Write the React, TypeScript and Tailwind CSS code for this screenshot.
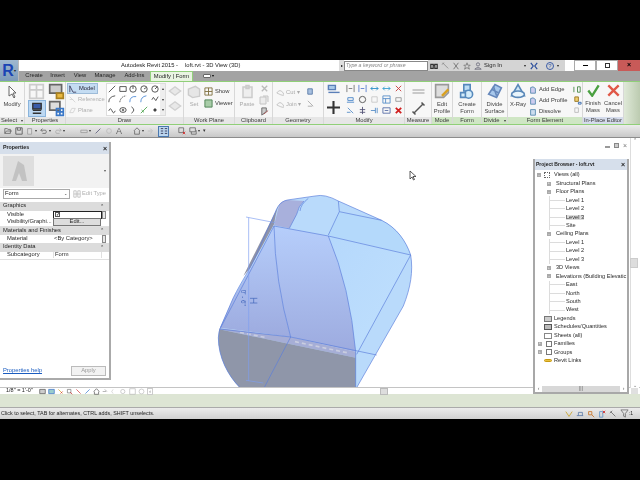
import React from "react";

type IP = { s?: number; c?: string; children?: React.ReactNode };
const I = ({ s = 9, c = "#555", children }: IP) => (
  <svg width={s} height={s} viewBox="0 0 10 10" fill="none" stroke={c} strokeWidth="1" className="shrink-0">
    {children}
  </svg>
);

const Panel = ({ w, label, green, blue, children, arrow }: { w: string; label: string; green?: boolean; blue?: boolean; arrow?: boolean; children?: React.ReactNode }) => (
  <div className={`${w} flex h-full shrink-0 flex-col border-r border-[#d8d8d8]`}>
    <div className="flex min-h-0 flex-1 items-stretch overflow-hidden">{children}</div>
    <div className={`flex h-[7px] items-center justify-center whitespace-nowrap text-[5.8px] leading-none text-[#3a3a3a] ${green ? "bg-[#cfe6c4]" : blue ? "bg-[#d5dcec]" : "bg-[#e6e6e6]"}`}>
      {label}
      {arrow && <span className="ml-1 text-[4px]">▾</span>}
    </div>
  </div>
);

const Big = ({ label, children, w = "w-[22px]" }: { label: React.ReactNode; children: React.ReactNode; w?: string }) => (
  <div className={`${w} flex shrink-0 flex-col items-center pt-[1px] text-center text-[5.8px] leading-[7px] text-[#444]`}>
    {children}
    <div className="mt-[2px] whitespace-nowrap">{label}</div>
  </div>
);

const Row = ({ icon, t, c = "#3a3a3a" }: { icon: React.ReactNode; t: string; c?: string }) => (
  <div className="flex h-[11px] items-center gap-[2px] whitespace-nowrap text-[5.8px] leading-none" style={{ color: c }}>
    {icon}
    <span>{t}</span>
  </div>
);

const GrayDoc = () => (
  <I s={10} c="#c4c4c4">
    <path d="M1 2h6v7H1zM4 1h5v6" fill="#ececec" />
  </I>
);

const drawIcons: React.ReactNode[] = [
  <path d="M1 9L9 1" />,
  <path d="M1 2h8v6H1z" />,
  <><circle cx="5" cy="5" r="4" /><path d="M5 5V1" /></>,
  <><circle cx="5" cy="5" r="4" /><path d="M5 5l3-2" /></>,
  <><circle cx="5" cy="5" r="4" /><path d="M5 5l3-3" /></>,
  <path d="M1 9Q1 2 9 1" />,
  <path d="M1 9Q2 2 9 1" strokeDasharray="2 1" />,
  <path d="M1 9Q1 1 9 2" stroke="#3b7dd0" />,
  <path d="M1 9Q1 2 8 1" stroke="#3b7dd0" />,
  <path d="M1 6l2-3 3 4 3-5" />,
  <path d="M1 6q2-5 4 0t4 0" />,
  <><ellipse cx="5" cy="5" rx="4" ry="3" /><circle cx="5" cy="5" r="1" /></>,
  <path d="M3 1q6 4 0 8" />,
  <path d="M1 9l8-8M2 5l3 3" stroke="#3a9a3a" />,
  <circle cx="5" cy="5" r="1.5" fill="#555" />,
];

const modIcons: React.ReactNode[] = [
  <path d="M1 1v8M9 1v8M3 5h4" stroke="#777" />,
  <path d="M1 1v8M9 1v8M3 5h4" stroke="#5a7fd0" />,
  <path d="M1 5h8M3 3l-2 2 2 2M7 3l2 2-2 2" stroke="#2c8ec8" />,
  <path d="M1 5h8M3 3l-2 2 2 2M7 3l2 2-2 2" stroke="#3aa0d0" />,
  <path d="M2 2l6 6M8 2L2 8" stroke="#c83a3a" />,
  <path d="M1 8h8M2 6h6V3H2z" stroke="#4a86c8" />,
  <circle cx="5" cy="5" r="3.5" stroke="#555" />,
  <path d="M2 2h6v6H2z" stroke="#c8c8c8" />,
  <path d="M1 1h8v8H1zM1 4h8M4 4v5" stroke="#5a90c8" />,
  <path d="M2 3h6v4H2z" stroke="#999" />,
  <path d="M2 2l3 3 3 3M1 7h4" stroke="#5a90c8" />,
  <path d="M5 1v8M2 4h6M2 7h6" stroke="#557" />,
  <path d="M1 5h5M6 2v6M8 2v6" stroke="#5a90c8" />,
  <path d="M1 2h8v6H1zM3 5h4" stroke="#5a70a8" />,
  <path d="M2 2l6 6M8 2L2 8" stroke="#d02020" strokeWidth="2" />,
];

const Tab = ({ t, active, w }: { t: string; active?: boolean; w: string }) => (
  <div className={`${w} flex h-full shrink-0 items-center justify-center whitespace-nowrap text-[5.8px] leading-none ${active ? "border-x border-t border-[#93d07c] bg-[#e9f4e2] text-[#222]" : "text-[#1f1f1f]"}`}>
    {t}
  </div>
);

const Qat = ({ children, caret }: { children: React.ReactNode; caret?: boolean }) => (
  <div className="flex items-center gap-[1px]">
    <I s={8} c="#666">{children}</I>
    {caret && <span className="text-[4px] text-[#333]">▾</span>}
  </div>
);

const PropHead = ({ t }: { t: string }) => (
  <div className="flex h-[8.5px] items-center justify-between bg-[#dcdcdc] pl-[3px] pr-[5px] text-[5.8px] leading-none text-[#1f1f1f]">
    <span>{t}</span>
    <span className="text-[5px]">⌃</span>
  </div>
);

const TreeRow = ({ pad, t, mark, sel, icon, markGap = "mr-[3px]" }: { pad: string; t: string; mark?: string; sel?: boolean; icon?: React.ReactNode; markGap?: string }) => (
  <div className={`flex h-[8.45px] items-center ${pad} text-[5.6px] leading-none text-[#2a2a2a]`}>
    {mark && <span className={`${markGap} flex h-[4px] w-[4px] shrink-0 items-center justify-center bg-[#aaa] text-[3px] leading-none text-white`}>{mark}</span>}
    {icon}
    <span className={`whitespace-nowrap ${sel ? "bg-[#dcdcdc]" : ""}`}>{t}</span>
  </div>
);

const Leaf = ({ t, sel }: { t: string; sel?: boolean }) => (
  <div className="flex h-[8.45px] items-center pl-[14px] text-[5.6px] leading-none text-[#2a2a2a]">
    <span className="flex h-full w-[17px] shrink-0 items-center border-l border-[#dcdcdc]">
      <span className="h-px w-[15px] bg-[#dcdcdc]" />
    </span>
    <span className={`whitespace-nowrap ${sel ? "bg-[#dcdcdc]" : ""}`}>{t}</span>
  </div>
);

const Shape = () => {
  const outline = "M225 95C232 78 240 62 262 57L345 45Q375 38 415 60L545 118C590 140 618 180 632 222C640 270 632 320 610 375L470 620H120C85 585 55 530 55 470Q56 450 62 438L100 350C125 300 150 265 165 230Z";
  return (
    <svg className="absolute left-[200px] top-[43px]" width="230" height="207" viewBox="0 0 690 621" fill="none">
      <defs>
        <linearGradient id="mid" x1="0" y1="0" x2="0" y2="1">
          <stop offset="0" stopColor="#b6cefb" />
          <stop offset="1" stopColor="#9dabdf" />
        </linearGradient>
        <linearGradient id="rt" x1="0" y1="0" x2="1" y2="1">
          <stop offset="0" stopColor="#b5d8fc" />
          <stop offset="1" stopColor="#c0e0fd" />
        </linearGradient>
      </defs>
      <path d={outline} fill="#b9dafb" />
      <path d="M222 135L385 165Q450 320 467 512L272 468Q225 300 222 135Z" fill="url(#mid)" />
      <path d="M222 135Q225 300 272 468L60 440L100 350L165 240Z" fill="url(#mid)" />
      <path d="M385 162L418 92L545 118C590 140 618 180 632 222Z" fill="#b4d9fb" />
      <path d="M385 162L632 222L470 520Q450 320 385 162Z" fill="url(#rt)" />
      <path d="M238 70Q248 58 262 57L312 60Q295 75 290 100L268 142L222 133Z" fill="#a8b0dc" />
      <path d="M238 70C228 90 226 110 222 130L150 262L130 285L225 95Z" fill="#8f93a8" />
      <path d="M60 442L272 468L467 512V530L265 488L58 445Z" fill="#a6aed6" />
      <path d="M58 445L265 488L467 530V621H120C85 585 55 530 55 470Z" fill="#8f96a9" />
      <path d="M120 454L200 470M285 482L445 516" stroke="#c9cde0" strokeWidth="5" strokeDasharray="12 9" />
      <g stroke="#5a7ddb" strokeWidth="2">
        <path d={outline} />
        <path d="M312 60Q295 75 290 100L268 142M325 52Q302 70 300 90" />
        <path d="M222 135L385 165L632 222M385 162L418 92L415 60M418 92L545 118" />
        <path d="M222 135Q225 300 272 468L192 621M385 165Q450 320 467 512V621M632 222L470 520" />
        <path d="M58 444L272 468L530 522M62 440L222 135" />
      </g>
      <g stroke="#7f9ff0" strokeWidth="2">
        <path d="M146 110V600M138 108L225 125M138 598L190 606" />
      </g>
      <path d="M150 352h22M150 366h22M161 352v14" stroke="#3d62b8" strokeWidth="2" />
      <text x="0" y="0" transform="translate(122 326) rotate(90)" fontSize="19" fill="#3d62b8" fontFamily="Liberation Sans, sans-serif">0' - 6"</text>
    </svg>
  );
};

export default function App() {
  return (
    <div className="relative flex h-[480px] w-[640px] flex-col overflow-hidden bg-black font-['Liberation_Sans',sans-serif]">
      <div className="h-[60px] shrink-0" />
      <div className="flex h-[359px] flex-col bg-white blur-[0.25px]">
        {/* title + tabs */}
        <div className="relative flex h-[11px] shrink-0 items-center bg-white">
          <div className="w-[121px]" />
          <div className="text-[5.8px] leading-none text-[#222]">Autodesk Revit 2015 -</div>
          <div className="ml-[7px] text-[5.8px] leading-none text-[#222]">loft.rvt - 3D View (3D)</div>
          <div className="absolute left-[339px] top-0 flex h-[11px] w-[301px] items-center">
            <div className="flex h-[11px] w-[5px] items-center justify-center bg-[#ddd] text-[4px]">▸</div>
            <div className="flex h-[10px] w-[84px] items-center border border-[#888] bg-white pl-[1px] text-[5.2px] italic leading-none text-[#888]">Type a keyword or phrase</div>
            <div className="flex h-[11px] w-[137px] items-center gap-[3px] bg-[#d4d4d4] pl-[2px] text-[5.8px] leading-none text-[#222]">
              <I s={8} c="#333"><path d="M1 3h3v5H1zM6 3h3v5H6zM4 4h2" strokeWidth="1.5" /></I>
              <I s={8} c="#888"><path d="M2 1l7 7M1 3l3-2" /></I>
              <I s={8} c="#666"><path d="M2 1l6 8M8 1L2 9" /></I>
              <I s={8} c="#777"><path d="M5 1l1 3h3L7 6l1 3-3-2-3 2 1-3-2-2h3z" /></I>
              <I s={8} c="#667"><circle cx="5" cy="3" r="2" /><path d="M1 9q4-4 8 0z" /></I>
              <span className="ml-[-1px] w-[30px]">Sign In</span>
              <span className="ml-[7px] text-[4px]">▾</span>
              <span className="ml-[1px]"><I s={8} c="#2b4e9c"><path d="M1 1l3 4-3 4M9 1L6 5l3 4" strokeWidth="1.5" /></I></span>
              <div className="ml-[5px] flex h-[8px] w-[8px] items-center justify-center rounded-full border border-[#3a5ca8] text-[6px] text-[#3a5ca8]">?</div>
              <span className="text-[4px]">▾</span>
            </div>
            <div className="ml-[9px] flex h-[11px] w-[22px] items-center justify-center border border-[#aaa] bg-white"><div className="h-[1px] w-[5px] bg-black" /></div>
            <div className="flex h-[11px] w-[22px] items-center justify-center border border-[#aaa] bg-white"><div className="h-[5px] w-[5px] border border-[#333]" /></div>
            <div className="flex h-[11px] w-[22px] items-center justify-center bg-[#c85a58] text-[7px] font-bold text-black">×</div>
          </div>
        </div>
        <div className="flex h-[10px] shrink-0 items-center bg-[#a3a3a3]">
          <div className="w-[22px]" />
          <Tab w="w-[24px]" t="Create" />
          <Tab w="w-[23px]" t="Insert" />
          <Tab w="w-[22px]" t="View" />
          <Tab w="w-[28px]" t="Manage" />
          <Tab w="w-[31px]" t="Add-Ins" />
          <Tab w="w-[43px]" t="Modify | Form" active />
          <div className="ml-[10px] flex items-center gap-[1px]">
            <div className="h-[4px] w-[8px] rounded-[1px] border border-[#666] bg-white" />
            <span className="text-[4px]">▾</span>
          </div>
        </div>

        {/* ribbon */}
        <div className="flex h-[44px] shrink-0 border-y border-[#90cf78] bg-[#f7f7f7]">
          <Panel w="w-[25px]" label="Select" arrow>
            <Big w="w-full" label="Modify">
              <svg width="10" height="14" viewBox="0 0 10 14" className="mt-[2px]"><path d="M2 1v10l3-2 2 4 1-1-2-4h3z" fill="#fff" stroke="#666" /></svg>
            </Big>
          </Panel>
          <Panel w="w-[41px]" label="Properties">
            <div className="grid grid-cols-2 gap-x-[2px] pl-[3px] pt-[1px]">
              <I s={17} c="#ccc"><path d="M1 1h4v8H1zM5 1h4v8H5zM1 4h8" /></I>
              <I s={17} c="#666"><path d="M1 1h7v5H1z" fill="#ccc" /><path d="M5 6h4v3H5z" fill="#e8b840" stroke="#a88020" /></I>
              <div className="flex h-[17px] w-[18px] items-center justify-center border border-[#8ab4dc] bg-[#bcd8f2]"><I s={14} c="#333"><path d="M2 1h6v4H2z" fill="#3a5ca8" /><path d="M2 6h6M2 8h6" /></I></div>
              <I s={17} c="#666"><path d="M1 1h6v5H1z" fill="#ddd" /><path d="M5 5h4v4H5zM7 5v4M5 7h4" stroke="#3a78c8" /></I>
            </div>
          </Panel>
          <Panel w="w-[118px]" label="Draw">
            <div className="flex w-[38px] flex-col pl-[1px] pt-[1px]">
              <div className="flex h-[11px] w-[31px] items-center gap-[2px] border border-[#9dbbd8] bg-[#c4dcf2] pl-[1px] text-[5.8px] leading-none text-[#223]">
                <I s={8} c="#335"><path d="M1 9V1l4 8h4" /></I>Model
              </div>
              <div className="pl-[2px]"><Row c="#b0b0b0" icon={<I s={7} c="#ccc"><path d="M1 1l8 8M1 5h5" /></I>} t="Reference" /></div>
              <div className="pl-[2px]"><Row c="#b0b0b0" icon={<I s={7} c="#ccc"><path d="M1 8l3-6h5L6 8z" /></I>} t="Plane" /></div>
            </div>
            <div className="ml-[2px] mt-[1px] flex h-[33px] w-[60px] border border-[#ddd] bg-white">
              <div className="grid flex-1 grid-cols-5 place-items-center">
                {drawIcons.map((d, i) => <I key={i} s={8} c="#333">{d}</I>)}
              </div>
              <div className="flex w-[5px] flex-col items-center justify-between bg-[#eee] text-[4px] leading-[10px] text-[#333]"><span>▴</span><span>▾</span><span>▾</span></div>
            </div>
            <div className="ml-[2px] flex flex-col items-center gap-[1px] pt-[2px]">
              <I s={14} c="#d0d0d0"><path d="M1 5l4-3 4 3-4 3z" fill="#e8e8e8" /></I>
              <I s={14} c="#d0d0d0"><path d="M1 5l4-3 4 3-4 3z" fill="#e8e8e8" /></I>
            </div>
          </Panel>
          <Panel w="w-[51px]" label="Work Plane">
            <Big w="w-[20px]" label={<span className="text-[#aaa]">Set</span>}><span className="mt-[2px] block"><I s={14} c="#ccc"><path d="M1 3l5-2 3 2v5l-5 1-3-2z" fill="#e6e6e6" /></I></span></Big>
            <div className="mt-[4px] flex flex-col gap-[1px]">
              <Row icon={<I s={9} c="#807040"><path d="M1 1h8v8H1zM1 5h8M5 1v8" /></I>} t="Show" />
              <Row icon={<I s={9} c="#4a8050"><path d="M1 1h8v8H1z" fill="#a8cca8" /></I>} t="Viewer" />
            </div>
          </Panel>
          <Panel w="w-[38px]" label="Clipboard">
            <Big w="w-[24px]" label={<span className="text-[#aaa]">Paste</span>}><span className="mt-[1px] block"><I s={15} c="#ccc"><path d="M2 2h6v7H2z" fill="#eee" /><path d="M4 1h2v2H4z" /></I></span></Big>
            <div className="flex flex-col items-center gap-[2px] pt-[2px]">
              <I s={9} c="#bbb"><path d="M2 2l6 6M8 2L2 8" strokeWidth="1.5" /></I>
              <GrayDoc />
              <I s={9} c="#666"><path d="M2 1h5v4L2 9z" fill="#ccc" /><path d="M4 8l5-4" stroke="#a05050" /></I>
            </div>
          </Panel>
          <Panel w="w-[51px]" label="Geometry">
            <div className="flex w-[30px] flex-col gap-[1px] pl-[3px] pt-[5px]">
              <Row c="#aaa" icon={<I s={8} c="#bbb"><path d="M1 5q4-6 8 0t-8 0" /></I>} t="Cut ▾" />
              <Row c="#aaa" icon={<I s={8} c="#bbb"><path d="M1 5q4-6 8 0t-8 0" /></I>} t="Join ▾" />
            </div>
            <div className="ml-[3px] flex flex-col gap-[3px] pt-[5px]">
              <I s={9} c="#5a7aa8"><path d="M2 2h5v6H2z" fill="#a8c0e0" /></I>
              <I s={9} c="#aaa"><path d="M2 2l6 6M2 8h5" /></I>
            </div>
          </Panel>
          <Panel w="w-[81px]" label="Modify">
            <div className="flex w-[19px] shrink-0 flex-col items-center gap-[3px] pt-[2px]">
              <I s={14} c="#5a7fb8"><path d="M1 1h5v3H1z" fill="#a8c8e8" /><path d="M1 6h8" /></I>
              <I s={13} c="#333"><path d="M5 0v10M0 5h10" strokeWidth="1.6" /></I>
            </div>
            <div className="ml-[2px] mt-[1px] grid h-[33px] flex-1 grid-cols-5 place-items-center">
              {modIcons.map((d, i) => <I key={i} s={9}>{d}</I>)}
            </div>
          </Panel>
          <Panel w="w-[27px]" label="Measure">
            <div className="flex w-full flex-col items-center gap-[2px] pt-[2px]">
              <I s={15} c="#bbb"><path d="M1 4h8M1 6h8" /></I>
              <I s={15} c="#555"><path d="M2 8l6-6" /><path d="M1 7l2 2M7 1l2 2" /></I>
            </div>
          </Panel>
          <Panel w="w-[21px]" label="Mode" green>
            <Big w="w-full" label={<>Edit<br />Profile</>}><I s={16} c="#999"><path d="M1 1h8v5l-3 3H1z" fill="#ddd" /><path d="M5 8l4-4" stroke="#d8a020" strokeWidth="1.5" /></I></Big>
          </Panel>
          <Panel w="w-[29px]" label="Form" green>
            <Big w="w-full" label={<>Create<br />Form</>}><I s={16} c="#5588bb"><path d="M3 1h4v4H3z" fill="#bcdcf4" /><circle cx="6" cy="7" r="2.5" fill="#d4ecfa" /><path d="M1 6h3v3H1z" fill="#d4ecfa" /></I></Big>
          </Panel>
          <Panel w="w-[26px]" label="Divide" green arrow>
            <Big w="w-full" label={<>Divide<br />Surface</>}><I s={16} c="#6688bb"><path d="M1 7l4-6 4 2-3 6z" fill="#a8c8ec" /><path d="M3 4l4 2M4 2l2 6" /></I></Big>
          </Panel>
          <Panel w="w-[75px]" label="Form Element" green>
            <Big w="w-[20px]" label="X-Ray"><I s={16} c="#5a88b8"><path d="M5 1L1 8h8z" fill="#cfe6f6" /><ellipse cx="5" cy="7" rx="4" ry="2" fill="#e8f4fc" /></I></Big>
            <div className="ml-[1px] mt-[2px] flex w-[46px] flex-col">
              <Row icon={<I s={8} c="#4a80a8"><path d="M2 9V2l3-1 3 2v6z" fill="#cce" /></I>} t="Add Edge" />
              <Row icon={<I s={8} c="#4a80a8"><path d="M2 9V2l3-1 3 2v6z" fill="#cce" /></I>} t="Add Profile" />
              <Row icon={<I s={8} c="#4a80a8"><path d="M2 2h6v7H2z" fill="#cde" /></I>} t="Dissolve" />
            </div>
            <div className="flex flex-col gap-[2px] pt-[3px]">
              <I s={9} c="#4a8a4a"><path d="M1 2v6M5 2h3v6H5z" /></I>
              <I s={9} c="#997722"><path d="M2 1h4v5H2z" fill="#f0d070" /><path d="M6 7h3v2H6z" stroke="#36a" /></I>
              <I s={9} c="#bbb"><path d="M2 1h4v5H2z" /></I>
            </div>
          </Panel>
          <Panel w="w-[41px]" label="In-Place Editor" blue>
            <Big w="w-1/2" label={<>Finish<br />Mass</>}><span className="my-[1px] block"><I s={13} c="#4aa040"><path d="M1 5l3 4 5-8" strokeWidth="1.800" /></I></span></Big>
            <Big w="w-1/2" label={<>Cancel<br />Mass</>}><span className="my-[1px] block"><I s={13} c="#e05848"><path d="M1 1l8 8M9 1L1 9" strokeWidth="1.800" /></I></span></Big>
          </Panel>
          <div className="flex-1 bg-gradient-to-r from-[#dfe9d8] to-[#bccbb0]" />
        </div>

        {/* QAT */}
        <div className="flex h-[13px] shrink-0 items-center gap-[3px] border-b border-[#8c8c8c] bg-gradient-to-b from-[#ececec] to-[#c8c8c8] pl-[4px]">
          <Qat><path d="M1 8V2h3l1 1h3v5zM1 8l2-3h7" /></Qat>
          <Qat><path d="M1 1h8v8H1zM3 1v3h4V1" strokeWidth="1.2" /></Qat>
          <Qat caret><path d="M2 2h5v7H2z" fill="#ddd" stroke="#999" /></Qat>
          <Qat caret><path d="M1 4h6q2 2 0 4H3M1 4l2-2M1 4l2 2" /></Qat>
          <Qat caret><path d="M9 4H3q-2 2 0 4h4M9 4L7 2M9 4L7 6" stroke="#aaa" /></Qat>
          <div className="w-[9px]" />
          <Qat caret><path d="M1 4h8v3H1z" stroke="#999" /></Qat>
          <Qat><path d="M2 8l6-6" stroke="#557" /></Qat>
          <Qat><circle cx="5" cy="5" r="3" stroke="#bbb" /></Qat>
          <span className="text-[9px] leading-none text-[#666]">A</span>
          <div className="w-[5px]" />
          <Qat caret><path d="M1 5l4-4 4 4M2 5v4h6V5" /></Qat>
          <Qat><path d="M1 5h5M4 2l3 3-3 3" stroke="#bbb" /></Qat>
          <div className="flex h-[11px] w-[11px] items-center justify-center border border-[#4a78b0] bg-[#bcd6ee]"><I s={8} c="#224"><path d="M1 2h3M6 2h3M1 5h3M6 5h3M1 8h3M6 8h3" /></I></div>
          <div className="w-[3px]" />
          <Qat><path d="M1 1h6v6H1z" /><path d="M6 6l3 3M9 6L6 9" stroke="#d02020" /></Qat>
          <Qat caret><path d="M1 1h7v5H1zM3 6v3h6V4" /></Qat>
          <span className="text-[5px] text-[#333]">▾</span>
        </div>

        {/* viewport */}
        <div className="relative flex min-h-0 flex-1 flex-col bg-white">
          <div className="relative min-h-0 flex-1 overflow-hidden">
            <Shape />
            <svg className="absolute left-[409px] top-[32px]" width="8" height="11" viewBox="0 0 8 11"><path d="M1 1v8l2-2 1.500 3 1-.5L4 6.500h3z" fill="#fff" stroke="#333" strokeWidth=".8" /></svg>
          </div>
          {/* view control bar */}
          <div className="flex h-[7px] shrink-0 items-center border-t border-[#c4c4c4] bg-white pl-[6px] text-[5.5px] leading-none text-[#222]">
            <span className="w-[32px] shrink-0 whitespace-nowrap">1/8" = 1'-0"</span>
            <div className="ml-[1px] flex items-center gap-[2px]">
              <I s={7} c="#555"><path d="M1 2h8v6H1z" fill="#ccc" /></I>
              <I s={7} c="#3a70c8"><path d="M1 2h8v6H1z" fill="#9cc" /></I>
              <I s={7} c="#d4a020"><path d="M2 2l6 6" /><path d="M8 5l-3 3" stroke="#d02020" /></I>
              <I s={7} c="#777"><path d="M2 2h5v5H2z" /><path d="M6 6l3 3" stroke="#d02020" /></I>
              <I s={7} c="#557"><path d="M2 2l6 6" stroke="#c33" /></I>
              <I s={7} c="#557"><path d="M2 8l6-6" stroke="#37c" /></I>
              <I s={7} c="#555"><path d="M1 5l4-4 4 4M2 5v4h6V5" /></I>
              <I s={7} c="#999"><path d="M1 5h5M4 2l3 3" /></I>
              <I s={7} c="#ccc"><path d="M3 2l-2 3 2 3" /></I>
              <I s={7} c="#bbb"><circle cx="4" cy="5" r="3" /></I>
              <I s={7} c="#bbb"><path d="M1 1h8v8H1z" /></I>
              <I s={7} c="#bbb"><circle cx="5" cy="5" r="3.500" /></I>
            </div>
            <div className="ml-[2px] flex h-[7px] w-[6px] shrink-0 items-center justify-center border border-[#ccc] text-[5px] text-[#666]">‹</div>
            <div className="ml-[227px] h-[7px] w-[8px] shrink-0 border border-[#bbb] bg-[#ddd]" />
          </div>

          {/* small window controls */}
          <div className="absolute left-[605px] top-[4px] flex items-center gap-[4px]">
            <div className="mt-[3px] h-[2px] w-[5px] bg-[#999]" />
            <div className="h-[5px] w-[5px] border border-[#888] bg-[#ccc]" />
            <span className="text-[7px] leading-none text-[#777]">×</span>
          </div>

          {/* right scrollbar */}
          <div className="absolute right-[1px] top-[0px] flex h-[250px] w-[9px] flex-col items-center justify-between border-l border-[#ddd] bg-white text-[5px] leading-none text-[#666]">
            <span>⌃</span>
            <span>⌄</span>
          </div>
          <div className="absolute right-[2px] top-[120px] h-[10px] w-[8px] border border-[#ccc] bg-[#ddd]" />
          <div className="absolute bottom-0 right-[2px] h-[6px] w-[7px] bg-[#e0e0e0]" />

          {/* Properties palette */}
          <div className="absolute left-0 top-[4px] flex h-[238px] w-[111px] flex-col border-b-2 border-r-2 border-[#aaa] bg-white">
            <div className="flex h-[12px] shrink-0 items-center justify-between bg-[#d6dfeb] pl-[3px] pr-[2px] text-[5.3px] font-bold leading-none text-[#222]">
              <span>Properties</span><span className="text-[7px]">×</span>
            </div>
            <div className="relative flex h-[34px] shrink-0 items-center bg-[#f2f2f2]">
              <div className="ml-[3px] flex h-[30px] w-[31px] items-center justify-center bg-[#dedede]">
                <svg width="18" height="24" viewBox="0 0 18 24"><path d="M2 22L8 2l6 4 3 16h-5L9 14l-3 8z" fill="#c2c2c2" /></svg>
              </div>
              <span className="absolute right-[3px] text-[4px] text-[#555]">▾</span>
            </div>
            <div className="flex h-[12px] shrink-0 items-center">
              <div className="ml-[3px] flex h-[10px] w-[67px] items-center justify-between border border-[#aaa] pl-[1px] pr-[2px] text-[5.8px] leading-none text-[#222]">
                <span>Form</span><span className="text-[4px]">⌄</span>
              </div>
              <div className="ml-[3px] flex items-center gap-[1px] whitespace-nowrap text-[5.8px] leading-none text-[#b0b0b0]">
                <I s={8} c="#bbb"><path d="M1 1h3v8H1zM6 1h3v8H6zM1 5h8" /></I>Edit Type
              </div>
            </div>
            <div className="h-[2px] shrink-0" />
            <PropHead t="Graphics" />
            <div className="flex h-[8px] items-center text-[5.8px] leading-none text-[#2a2a2a]">
              <span className="w-[53px] pl-[7px]">Visible</span>
              <div className="flex h-[8px] w-[49px] items-center border border-[#222] bg-white pl-[1px]"><div className="flex h-[5px] w-[5px] items-center justify-center border border-[#555] text-[5px] leading-none text-black">✓</div></div>
              <div className="h-[8px] w-[4px] border border-[#888] bg-[#e8e8e8]" />
            </div>
            <div className="flex h-[8px] items-center border-b border-[#e0e0e0] text-[5.8px] leading-none text-[#2a2a2a]">
              <span className="w-[53px] whitespace-nowrap pl-[7px]">Visibility/Graphi...</span>
              <div className="flex h-[8px] w-[48px] items-center justify-center border border-[#777] bg-[#ddd]">Edit...</div>
            </div>
            <PropHead t="Materials and Finishes" />
            <div className="flex h-[8px] items-center text-[5.8px] leading-none text-[#2a2a2a]">
              <span className="w-[53px] pl-[7px]">Material</span>
              <span className="w-[49px] pl-[1px]">&lt;By Category&gt;</span>
              <div className="h-[8px] w-[4px] border border-[#888] bg-[#e8e8e8]" />
            </div>
            <PropHead t="Identity Data" />
            <div className="flex h-[8px] items-center border-b border-[#e0e0e0] text-[5.8px] leading-none text-[#2a2a2a]">
              <span className="w-[53px] pl-[7px]">Subcategory</span>
              <span className="w-[49px] border-x border-[#e0e0e0] pl-[1px]">Form</span>
            </div>
            <div className="min-h-0 flex-1" />
            <div className="flex h-[13px] shrink-0 items-center justify-between pb-[1px] pl-[3px] pr-[3px]">
              <span className="text-[5.8px] leading-none text-[#1a5cc0] underline">Properties help</span>
              <div className="flex h-[10px] w-[35px] items-center justify-center border border-[#bbb] bg-[#f2f2f2] text-[5.8px] leading-none text-[#999]">Apply</div>
            </div>
          </div>

          {/* Project browser */}
          <div className="absolute left-[533px] top-[21px] flex h-[235px] w-[96px] flex-col border-b-2 border-l-2 border-r-2 border-[#a8a8a8] bg-white">
            <div className="flex h-[11px] shrink-0 items-center justify-between bg-[#d6dfeb] pl-[1px] pr-[2px] text-[5px] font-bold leading-none text-[#222]">
              <span>Project Browser - loft.rvt</span><span className="text-[7px]">×</span>
            </div>
            <div className="min-h-0 flex-1 overflow-hidden pt-[1px]">
              <TreeRow pad="pl-[2px]" mark="-" t="Views (all)" icon={<span className="mr-[4px] h-[6px] w-[6px] shrink-0 border border-dotted border-[#666]" />} />
              <TreeRow pad="pl-[12px]" mark="+" markGap="mr-[5px]" t="Structural Plans" />
              <TreeRow pad="pl-[12px]" mark="-" markGap="mr-[5px]" t="Floor Plans" />
              <Leaf t="Level 1" />
              <Leaf t="Level 2" />
              <Leaf t="Level 3" sel />
              <Leaf t="Site" />
              <TreeRow pad="pl-[12px]" mark="-" markGap="mr-[5px]" t="Ceiling Plans" />
              <Leaf t="Level 1" />
              <Leaf t="Level 2" />
              <Leaf t="Level 3" />
              <TreeRow pad="pl-[12px]" mark="+" markGap="mr-[5px]" t="3D Views" />
              <TreeRow pad="pl-[12px]" mark="-" markGap="mr-[5px]" t="Elevations (Building Elevatic" />
              <Leaf t="East" />
              <Leaf t="North" />
              <Leaf t="South" />
              <Leaf t="West" />
              <TreeRow pad="pl-[9px]" t="Legends" icon={<span className="mr-[2px] h-[6px] w-[8px] shrink-0 border border-[#777] bg-[#ccc]" />} />
              <TreeRow pad="pl-[9px]" t="Schedules/Quantities" icon={<span className="mr-[2px] h-[6px] w-[8px] shrink-0 border border-[#555] bg-[#bbb]" />} />
              <TreeRow pad="pl-[9px]" t="Sheets (all)" icon={<span className="mr-[2px] h-[6px] w-[8px] shrink-0 border border-[#888]" />} />
              <TreeRow pad="pl-[3px]" mark="+" markGap="mr-[4px]" t="Families" icon={<span className="mr-[2px] h-[6px] w-[6px] shrink-0 border border-[#777]" />} />
              <TreeRow pad="pl-[3px]" mark="+" markGap="mr-[4px]" t="Groups" icon={<span className="mr-[2px] h-[6px] w-[6px] shrink-0 border border-[#777]" />} />
              <TreeRow pad="pl-[9px]" t="Revit Links" icon={<span className="mr-[2px] h-[3px] w-[8px] shrink-0 rounded-full border border-[#c89a10] bg-[#e8c040]" />} />
            </div>
            <div className="flex h-[7px] shrink-0 items-center text-[5px] leading-none text-[#666]">
              <span className="w-[7px] text-center">‹</span>
              <div className="flex h-[6px] flex-1 items-center justify-center bg-[#d8d8d8]">|||</div>
              <span className="w-[7px] text-center">›</span>
            </div>
          </div>
        </div>

        {/* green band + status */}
        <div className="h-[14px] shrink-0 border-b border-[#aaa] bg-[#dde5d4]" />
        <div className="flex h-[11px] shrink-0 items-center justify-between bg-gradient-to-b from-[#ececec] to-[#d0d0d0] pl-[1px] pr-[7px] text-[5.4px] leading-none text-[#222]">
          <span>Click to select, TAB for alternates, CTRL adds, SHIFT unselects.</span>
          <div className="flex items-center gap-[3px]">
            <I s={8} c="#c8a020"><path d="M1 2l4 6 4-6" /></I>
            <I s={8} c="#5a7aa8"><path d="M1 7h8M3 7V3h5v4" /></I>
            <I s={8} c="#c87020"><path d="M2 2h4v4H2z" /><path d="M6 6l3 3" /></I>
            <I s={8} c="#5a90c8"><path d="M2 2h4v7H2z" /><path d="M6 1l3 3M9 1L6 4" stroke="#d02020" /></I>
            <I s={8} c="#666"><path d="M2 2l6 6M1 4l3-3" /></I>
            <I s={9} c="#777"><path d="M1 1h8L6 5v4L4 8V5z" /></I>
            <span className="ml-[-3px] text-[5px]">:1</span>
          </div>
        </div>
      </div>
      <div className="flex-1" />
      {/* Revit application button */}
      <div className="absolute left-0 top-[60px] flex h-[21px] w-[19px] items-center justify-center border-r border-[#bbb] bg-gradient-to-b from-[#9fb8d0] to-[#7e9ab8]">
        <span className="text-[16px] font-bold leading-none text-[#1a44b4]">R</span>
        <span className="text-[4px] text-[#222]">▾</span>
      </div>
    </div>
  );
}
